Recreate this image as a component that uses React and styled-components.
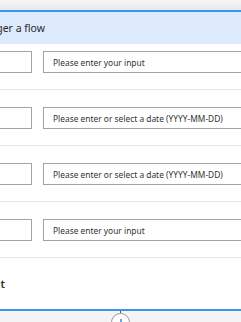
import React from 'react';
import styled, { createGlobalStyle } from 'styled-components';

const GlobalStyle = createGlobalStyle`
    html, body {
        margin: 0;
        padding: 0;
        overflow: hidden;
        background: #f2f2f2;
    }
    body {
        font-family: "Noto Sans", "Open Sans", sans-serif;
        color: #333;
    }
`;

const Canvas = styled.div`
    width: 241px;
    height: 322px;
    overflow: hidden;
    padding-top: 10px;
    box-sizing: border-box;
    background: linear-gradient(#f7f7f7 0px, #e9e9e9 10px, #f1f1f1 10px, #f4f4f4 100%);
`;

const Card = styled.div`
    margin-left: -200px;
    width: 640px;
    min-width: 640px;
    background: #fff;
    border: 2px solid #3d93ea;
    box-sizing: border-box;
`;

const Header = styled.div`
    height: 32px;
    background: #dceafc;
    display: flex;
    align-items: center;
`;

const Title = styled.div`
    width: 243px;
    text-align: right;
    font-size: 10.5px;
    color: #2b2b2b;
    white-space: nowrap;
`;

const Row = styled.div`
    display: flex;
    gap: 11px;
    padding: ${p => (p.$first ? '7px' : '17px')} 0 16px 20px;
    border-bottom: 1px solid #e6e6e6;
`;

const Field = styled.div`
    height: 22px;
    box-sizing: border-box;
    border: 1px solid #a3a3a3;
    background: #fff;
    display: flex;
    align-items: center;
    padding-left: 9px;
    font-size: 8.4px;
    color: #333;
    white-space: nowrap;
    width: ${p => p.$width || 'auto'};
    flex: ${p => (p.$grow ? 1 : 'none')};
`;

const Footer = styled.div`
    height: 51px;
    display: flex;
    align-items: center;
`;

const AddLink = styled.div`
    width: 203px;
    text-align: right;
    font-size: 11px;
    font-weight: 600;
    color: #2b2b2b;
    white-space: nowrap;
`;

const Below = styled.div`
    display: flex;
    flex-direction: column;
    align-items: center;
`;

const Connector = styled.div`
    width: 1px;
    height: 2px;
    background: #555;
`;

const PlusButton = styled.div`
    width: 19px;
    height: 19px;
    border-radius: 50%;
    border: 1px solid #9a9a9a;
    background: #fff;
    box-sizing: border-box;
    display: flex;
    align-items: center;
    justify-content: center;
`;

const rows = [
    'Please enter your input',
    'Please enter or select a date (YYYY-MM-DD)',
    'Please enter or select a date (YYYY-MM-DD)',
    'Please enter your input',
];

const App = () => (
    <>
        <GlobalStyle />
        <Canvas>
            <Card>
                <Header>
                    <Title>Manually trigger a flow</Title>
                </Header>
                {rows.map((text, i) => (
                    <Row key={i} $first={i === 0}>
                        <Field $width="210px" />
                        <Field $grow>{text}</Field>
                    </Row>
                ))}
                <Footer>
                    <AddLink>+ Add an input</AddLink>
                </Footer>
            </Card>
            <Below>
                <Connector />
                <PlusButton>
                    <svg width="10" height="10" viewBox="0 0 10 10">
                        <path d="M5 1v8M1 5h8" stroke="#2f7fd6" strokeWidth="1.4" />
                    </svg>
                </PlusButton>
            </Below>
        </Canvas>
    </>
);

export default App;
